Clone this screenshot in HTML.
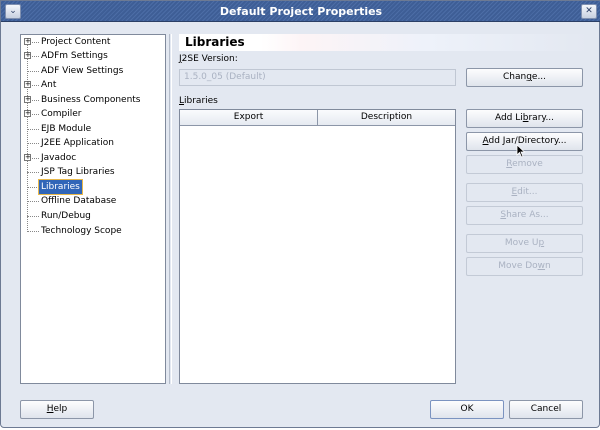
<!DOCTYPE html>
<html><head><style>
*{margin:0;padding:0;box-sizing:border-box}
body{width:600px;height:430px;background:#fff;font-family:"DejaVu Sans","Liberation Sans",sans-serif;font-size:9px;color:#000;position:relative;overflow:hidden}
.win{position:absolute;left:0;top:0;width:600px;height:428px;background:#e3e8f1;border:1px solid #6d7a93;border-radius:0 0 4px 4px}
.title{position:absolute;left:0;top:0;width:600px;height:21px;background:repeating-linear-gradient(135deg,#4c6da6 0 1px,#3e5e96 1px 3px);border-bottom:1px solid #2b3f66;color:#fff;font-weight:bold;font-size:11px;text-align:center;line-height:21px}
.tb{position:absolute;top:3px;width:16px;height:15px;background:linear-gradient(#f4f6fb,#c7d0e0);border:1px solid #8090b0;border-radius:2px;color:#2c3f66;font-size:9px;text-align:center;line-height:13px}
.a{position:absolute}
.tree{left:19px;top:33px;width:146px;height:350px;background:#fff;border:1px solid #808a9c}
.ti{position:absolute;left:20px;height:14px;line-height:14px;white-space:nowrap}
.pl{position:absolute;left:3px;width:7px;height:7px;border:1px solid #777;background:#fff;font-size:7px;line-height:5px;text-align:center}
.dash{position:absolute;left:6px;width:12px;border-top:1px dotted #888}
.btn{position:absolute;left:465px;width:117px;height:19px;border:1px solid #8c96a8;border-radius:2px;background:linear-gradient(#fdfdfe,#dfe4ec);text-align:center;line-height:17px}
.dis{border-color:#c3cad6;background:#e3e8f1;color:#aab2c2}
u{text-decoration:underline}
</style></head><body>
<div class="win">
<div class="title">Default Project Properties</div>
<div class="tb" style="left:4px">&#8964;</div>
<div class="tb" style="left:580px">✕</div>

<div class="a tree">
<div style="position:absolute;left:6px;top:7px;height:190px;border-left:1px dotted #888"></div>
<div class="dash" style="top:7px"></div><div class="pl" style="top:3px">+</div><div class="ti" style="top:0">Project Content</div>
<div class="dash" style="top:21px"></div><div class="pl" style="top:17px">+</div><div class="ti" style="top:14px">ADFm Settings</div>
<div class="dash" style="top:36px"></div><div class="ti" style="top:29px">ADF View Settings</div>
<div class="dash" style="top:50px"></div><div class="pl" style="top:46px">+</div><div class="ti" style="top:43px">Ant</div>
<div class="dash" style="top:65px"></div><div class="pl" style="top:61px">+</div><div class="ti" style="top:58px">Business Components</div>
<div class="dash" style="top:79px"></div><div class="pl" style="top:75px">+</div><div class="ti" style="top:72px">Compiler</div>
<div class="dash" style="top:94px"></div><div class="ti" style="top:87px">EJB Module</div>
<div class="dash" style="top:108px"></div><div class="ti" style="top:101px">J2EE Application</div>
<div class="dash" style="top:123px"></div><div class="pl" style="top:119px">+</div><div class="ti" style="top:116px">Javadoc</div>
<div class="dash" style="top:137px"></div><div class="ti" style="top:130px">JSP Tag Libraries</div>
<div class="dash" style="top:152px"></div><div class="ti" style="top:145px;background:#3166b8;color:#fff;padding:0 2px;left:18px;outline:1px solid #e8b84a">Libraries</div>
<div class="dash" style="top:166px"></div><div class="ti" style="top:159px">Offline Database</div>
<div class="dash" style="top:181px"></div><div class="ti" style="top:174px">Run/Debug</div>
<div class="dash" style="top:196px"></div><div class="ti" style="top:189px">Technology Scope</div>
</div>
<div class="a" style="left:168px;top:33px;width:3px;height:350px;border-left:1px solid #b5bdcb;border-right:1px solid #fff"></div>

<div class="a" style="left:178px;top:33px;width:410px;height:17px;background:linear-gradient(90deg,#fff 0 20%,#fdf4f6 30%,#eef2fa 60%,#e3e8f1);font-weight:bold;font-size:12px;line-height:17px;padding-left:6px">Libraries</div>
<div class="a" style="left:178px;top:53px"><u>J</u>2SE Version:</div>
<div class="a" style="left:178px;top:68px;width:277px;height:17px;border:1px solid #c0c7d3;color:#aab2c2;line-height:15px;padding-left:4px">1.5.0_05 (Default)</div>
<div class="a" style="left:178px;top:95px"><u>L</u>ibraries</div>
<div class="a" style="left:178px;top:108px;width:277px;height:275px;background:#fff;border:1px solid #808a9c">
<div style="position:absolute;left:0;top:0;width:138px;height:16px;border-right:1px solid #8c96a8;border-bottom:1px solid #8c96a8;background:linear-gradient(#fafbfd,#e6eaf1);text-align:center;line-height:15px">Export</div>
<div style="position:absolute;left:138px;top:0;width:137px;height:16px;border-bottom:1px solid #8c96a8;background:linear-gradient(#fafbfd,#e6eaf1);text-align:center;line-height:15px">Description</div>
</div>

<div class="btn" style="top:67px">Chan<u>g</u>e...</div>
<div class="btn" style="top:108px">Add Li<u>b</u>rary...</div>
<div class="btn" style="top:131px"><u>A</u>dd Jar/Directory...</div>
<div class="btn dis" style="top:154px"><u>R</u>emove</div>
<div class="btn dis" style="top:182px"><u>E</u>dit...</div>
<div class="btn dis" style="top:205px"><u>S</u>hare As...</div>
<div class="btn dis" style="top:233px">Move U<u>p</u></div>
<div class="btn dis" style="top:256px">Move Do<u>w</u>n</div>
<svg class="a" style="left:515px;top:143px" width="10" height="14"><path d="M1 1 L1 11 L3.5 8.5 L5.5 13 L7 12.3 L5 8 L8.5 8 Z" fill="#000" stroke="#fff" stroke-width="0.8"/></svg>

<div class="btn" style="left:19px;top:399px;width:74px"><u>H</u>elp</div>
<div class="btn" style="left:429px;top:399px;width:74px;border-color:#7b93c0">OK</div>
<div class="btn" style="left:508px;top:399px;width:74px">Cancel</div>
</div>
</body></html>
